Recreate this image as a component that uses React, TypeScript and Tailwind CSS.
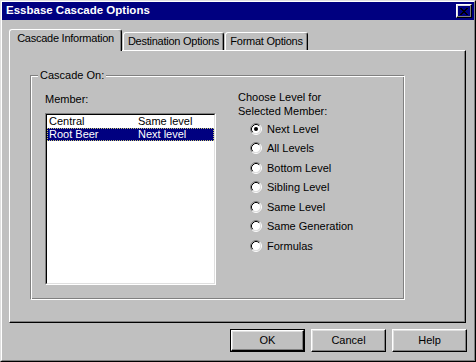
const raised =
  "border border-t-white border-l-white border-r-black border-b-black shadow-[inset_-1px_-1px_#808080,inset_1px_1px_#dfdfdf]";

const levels = [
  "Next Level",
  "All Levels",
  "Bottom Level",
  "Sibling Level",
  "Same Level",
  "Same Generation",
  "Formulas",
];

function Radio({ checked }: { checked?: boolean }) {
  return (
    <svg width="12" height="12" viewBox="0 0 12 12" className="shrink-0">
      <circle cx="6" cy="6" r="4.5" fill="#fff" />
      <path d="M2.11 9.89A5.5 5.5 0 0 1 9.89 2.11" fill="none" stroke="#808080" />
      <path d="M9.89 2.11A5.5 5.5 0 0 1 2.11 9.89" fill="none" stroke="#fff" />
      <path d="M2.82 9.18A4.5 4.5 0 0 1 9.18 2.82" fill="none" stroke="#000" />
      <path d="M9.18 2.82A4.5 4.5 0 0 1 2.82 9.18" fill="none" stroke="#dfdfdf" />
      {checked && <circle cx="6" cy="6" r="2" fill="#000" />}
    </svg>
  );
}

function Tab({ label, active, width }: { label: string; active?: boolean; width: string }) {
  return (
    <div
      className={`${width} flex justify-center rounded-t-[3px] border-t border-l border-r border-t-white border-l-white border-r-black shadow-[inset_-1px_0_#808080] bg-[#c0c0c0] leading-[13px] pt-[2px] tracking-[-0.25px] ${
        active ? "h-[22px] -mb-px relative z-10" : "h-[18px]"
      }`}
    >
      {label}
    </div>
  );
}

function Button({ label, isDefault }: { label: string; isDefault?: boolean }) {
  const inner = (
    <div className={`${raised} h-full flex items-center justify-center`}>{label}</div>
  );
  return (
    <div className={`w-[75px] h-[23px] ${isDefault ? "border border-black" : ""}`}>{inner}</div>
  );
}

export default function App() {
  return (
    <div className="w-[476px] h-[362px] bg-[#c0c0c0] text-[11px] text-black font-['Liberation_Sans',Arial,sans-serif] border border-t-[#dfdfdf] border-l-[#dfdfdf] border-r-black border-b-black">
      <div className="h-full flex flex-col border border-t-white border-l-white border-r-[#808080] border-b-[#808080]">
        {/* title bar */}
        <div className="h-[18px] bg-[#000080] flex items-center justify-between pl-[4px] pr-[2px]">
          <span className="text-white font-bold text-[11.5px]">Essbase Cascade Options</span>
          <div className={`${raised} w-[16px] h-[14px] flex items-center justify-center`}>
            <svg width="8" height="7" viewBox="0 0 8 7" shapeRendering="crispEdges" className="mt-px">
              <path
                d="M0 0h2v1H0z M6 0h2v1H6z M1 1h2v1H1z M5 1h2v1H5z M2 2h4v1H2z M3 3h2v1H3z M2 4h4v1H2z M1 5h2v1H1z M5 5h2v1H5z M0 6h2v1H0z M6 6h2v1H6z"
                fill="#000"
              />
            </svg>
          </div>
        </div>

        {/* tabs */}
        <div className="flex items-end mt-[9px] ml-[7px]">
          <Tab label="Cascade Information" active width="w-[113px]" />
          <div className="w-px" />
          <Tab label="Destination Options" width="w-[101px]" />
          <div className="w-px" />
          <Tab label="Format Options" width="w-[83px]" />
        </div>

        {/* panel */}
        <div className="ml-[7px] w-[457px] h-[273px] border border-t-white border-l-white border-r-black border-b-black shadow-[inset_-1px_-1px_#808080]">
          <div className="relative ml-[20px] mt-[24px] w-[375px] h-[225px] border border-t-[#808080] border-l-[#808080] border-r-white border-b-white shadow-[inset_1px_1px_#fff,inset_-1px_-1px_#808080]">
            <div className="absolute left-[7px] -top-[7px] px-[2px] bg-[#c0c0c0] leading-[13px]">
              Cascade On:
            </div>
            <div className="flex items-start pl-[14px]">
              <div className="pt-[17px]">
                <div className="leading-[13px]">Member:</div>
                <div className="mt-[7px] w-[171px] h-[172px] border border-t-[#808080] border-l-[#808080] border-r-white border-b-white">
                  <div className="h-full bg-white border border-t-black border-l-black border-r-[#dfdfdf] border-b-[#dfdfdf] leading-[11px]">
                    <div className="grid grid-cols-[89px_1fr] h-[13px] pl-[2px] pt-px">
                      <span>Central</span>
                      <span>Same level</span>
                    </div>
                    <div className="grid grid-cols-[89px_1fr] h-[13px] pl-[1px] bg-[#000080] text-white border border-dotted border-[#c8c870]">
                      <span>Root Beer</span>
                      <span>Next level</span>
                    </div>
                  </div>
                </div>
              </div>
              <div className="ml-[22px] pt-[14px]">
                <div className="leading-[14px]">
                  Choose Level for
                  <br />
                  Selected Member:
                </div>
                <div className="mt-[1px] pl-[12px]">
                  {levels.map((l, i) => (
                    <div key={l} className="h-[19.5px] flex items-center gap-[5px]">
                      <Radio checked={i === 0} />
                      <span>{l}</span>
                    </div>
                  ))}
                </div>
              </div>
            </div>
          </div>
        </div>

        {/* buttons */}
        <div className="flex justify-end gap-[6px] mt-[6px] mr-[7px]">
          <Button label="OK" isDefault />
          <Button label="Cancel" />
          <Button label="Help" />
        </div>
      </div>
    </div>
  );
}
